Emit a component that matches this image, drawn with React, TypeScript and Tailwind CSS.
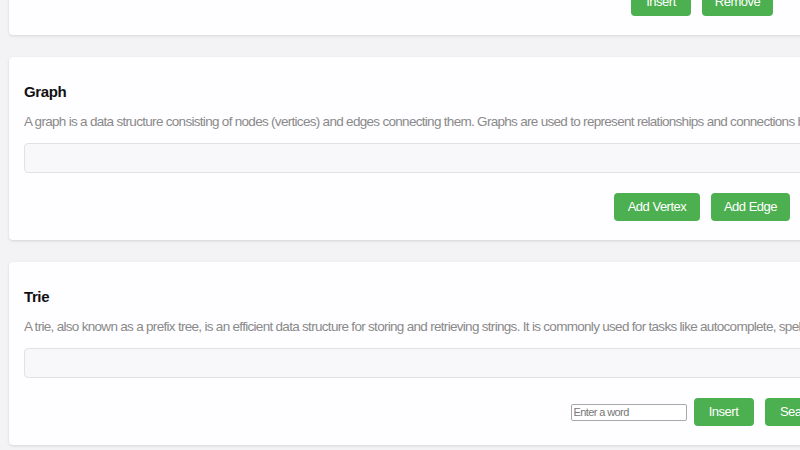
import React from 'react';

type Action = { label: string; width: string };

const cards: {
  title: string;
  description: string;
  input?: boolean;
  actions: Action[];
}[] = [
  {
    title: 'Linked List',
    description:
      'A linked list is a linear data structure in which elements are stored in nodes, and each node points to the next node in the sequence. Linked lists allow efficient insertion and removal of elements.',
    actions: [
      { label: 'Insert', width: 'w-[60px]' },
      { label: 'Remove', width: 'w-[71px]' },
    ],
  },
  {
    title: 'Graph',
    description:
      'A graph is a data structure consisting of nodes (vertices) and edges connecting them. Graphs are used to represent relationships and connections between objects in networks, maps and social media.',
    actions: [
      { label: 'Add Vertex', width: 'w-[86px]' },
      { label: 'Add Edge', width: 'w-[79px]' },
    ],
  },
  {
    title: 'Trie',
    description:
      'A trie, also known as a prefix tree, is an efficient data structure for storing and retrieving strings. It is commonly used for tasks like autocomplete, spell checking and IP routing.',
    input: true,
    actions: [
      { label: 'Insert', width: 'w-[60px]' },
      { label: 'Search', width: 'w-[69px]' },
    ],
  },
];

function Card({ card }: { card: (typeof cards)[number] }) {
  return (
    <section className="mx-[9px] rounded-[4px] bg-[#fefdff] px-[15px] pt-[26px] pb-[19px] shadow-[0_1px_3px_rgba(0,0,0,0.13)]">
      <h3 className="text-[15px] leading-[18px] font-bold tracking-[-0.4px] text-[#111]">{card.title}</h3>
      <p className="mt-[11px] whitespace-nowrap text-[13.5px] leading-[20px] tracking-[-0.7px] text-[#8a8a8a]">
        {card.description}
      </p>
      <div className="mt-[11px] h-[30px] rounded-[4px] border border-[#e2e2e4] bg-[#f8f8fa]" />
      <div className="mt-[20px] flex items-center justify-center">
        {card.input && (
          <input
            type="text"
            placeholder="Enter a word"
            className="mr-[7px] h-[17px] w-[116px] rounded-[2px] border border-[#a8a8a8] bg-white px-[2px] text-[11px] tracking-[-0.6px] text-[#333] placeholder:text-[#777] outline-none"
          />
        )}
        {card.actions.map((a, i) => (
          <button
            key={a.label}
            type="button"
            className={`${a.width} ${i > 0 ? 'ml-[11px]' : ''} h-[28px] rounded-[4px] bg-[#4caf50] text-[13px] tracking-[-0.5px] text-white`}
          >
            {a.label}
          </button>
        ))}
      </div>
    </section>
  );
}

export default function App() {
  return (
    <div
      className="h-screen w-screen overflow-hidden bg-[#f3f2f5]"
      style={{ fontFamily: '"Liberation Sans", Arial, sans-serif' }}
    >
      <div className="-mt-[148px] flex w-[1404px] flex-col gap-[22px]">
        {cards.map((c) => (
          <Card key={c.title} card={c} />
        ))}
      </div>
    </div>
  );
}
